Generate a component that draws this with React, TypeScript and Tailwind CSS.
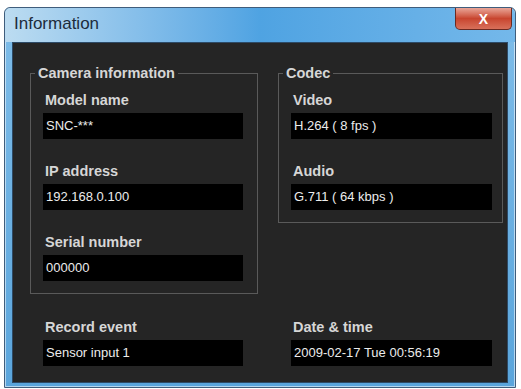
import React from "react";

const font = { fontFamily: '"Liberation Sans", Arial, sans-serif' };

function Field({ label, value, w }: { label: string; value: string; w: string }) {
  return (
    <div className={`flex flex-col ${w}`}>
      <div className="h-[20px] pl-[2px] text-[14.5px] font-bold leading-[20px] text-[#d6d6d6]">{label}</div>
      <div className="mt-[3px] flex h-[26px] items-center bg-black pl-[3px] text-[13px] text-[#ececec]">{value}</div>
    </div>
  );
}

export default function App() {
  return (
    <div className="h-[389px] w-[521px] bg-white pl-[4px] pt-[7px]" style={font}>
      <div className="flex h-[381px] w-[512px] flex-col rounded-t-[6px] border border-[#3f5d7c] bg-gradient-to-b from-[#7fbde9] to-[#5aa5dc] shadow-[inset_0_0_0_1px_rgba(255,255,255,0.55)]">
        <div className="relative flex h-[34px] items-start justify-between rounded-t-[6px] bg-gradient-to-r from-[#bcdcf1] via-[#4fa3e2] to-[#74b8ea]">
          <div className="pl-[9px] pt-[4px] text-[17px] leading-[24px] text-[#1d2c3c]">Information</div>
          <div className="mr-[3px] flex h-[22px] w-[57px] items-center justify-center rounded-b-[5px] border border-t-0 border-[#6b2a22] bg-gradient-to-b from-[#e8a598] via-[#c8452f] to-[#d8705a] text-[14px] font-bold leading-none text-white">
            X
          </div>
        </div>
        <div className="mx-[7px] flex h-[341px] flex-col border border-[#2d4a66] bg-[#252525] pl-[17px] pt-[21px]">
          <div className="flex items-start gap-[20px]">
            <fieldset className="w-[228px] border border-[#5a5a5a] p-0">
              <legend className="ml-[4px] px-[3px] text-[14.5px] font-bold leading-[18px] text-[#d6d6d6]">Camera information</legend>
              <div className="flex flex-col gap-[22px] pb-[12px] pl-[12px] pt-[8px]">
                <Field label="Model name" value="SNC-***" w="w-[200px]" />
                <Field label="IP address" value="192.168.0.100" w="w-[200px]" />
                <Field label="Serial number" value="000000" w="w-[200px]" />
              </div>
            </fieldset>
            <fieldset className="w-[225px] border border-[#5a5a5a] p-0">
              <legend className="ml-[4px] px-[3px] text-[14.5px] font-bold leading-[18px] text-[#d6d6d6]">Codec</legend>
              <div className="flex flex-col gap-[22px] pb-[12px] pl-[12px] pt-[8px]">
                <Field label="Video" value="H.264 ( 8 fps )" w="w-[201px]" />
                <Field label="Audio" value="G.711 ( 64 kbps )" w="w-[201px]" />
              </div>
            </fieldset>
          </div>
          <div className="mt-[23px] flex gap-[48px] pl-[13px]">
            <Field label="Record event" value="Sensor input 1" w="w-[200px]" />
            <Field label="Date & time" value="2009-02-17 Tue 00:56:19" w="w-[201px]" />
          </div>
        </div>
      </div>
    </div>
  );
}
